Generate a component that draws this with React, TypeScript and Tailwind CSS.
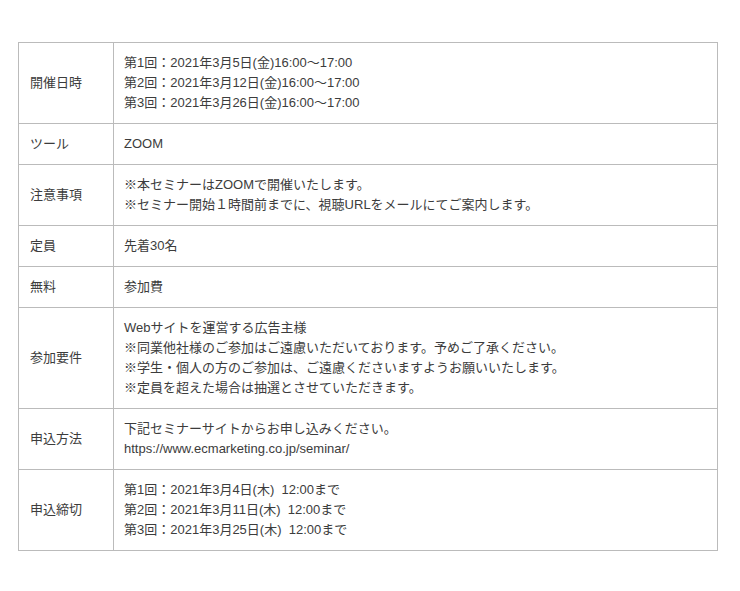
import React from "react";

const rows: { label: string; lines: string[] }[] = [
  {
    label: "開催日時",
    lines: [
      "第1回：2021年3月5日(金)16:00〜17:00",
      "第2回：2021年3月12日(金)16:00〜17:00",
      "第3回：2021年3月26日(金)16:00〜17:00",
    ],
  },
  { label: "ツール", lines: ["ZOOM"] },
  {
    label: "注意事項",
    lines: [
      "※本セミナーはZOOMで開催いたします。",
      "※セミナー開始１時間前までに、視聴URLをメールにてご案内します。",
    ],
  },
  { label: "定員", lines: ["先着30名"] },
  { label: "無料", lines: ["参加費"] },
  {
    label: "参加要件",
    lines: [
      "Webサイトを運営する広告主様",
      "※同業他社様のご参加はご遠慮いただいております。予めご了承ください。",
      "※学生・個人の方のご参加は、ご遠慮くださいますようお願いいたします。",
      "※定員を超えた場合は抽選とさせていただきます。",
    ],
  },
  {
    label: "申込方法",
    lines: [
      "下記セミナーサイトからお申し込みください。",
      "https://www.ecmarketing.co.jp/seminar/",
    ],
  },
  {
    label: "申込締切",
    lines: [
      "第1回：2021年3月4日(木)  12:00まで",
      "第2回：2021年3月11日(木)  12:00まで",
      "第3回：2021年3月25日(木)  12:00まで",
    ],
  },
];

export default function App() {
  return (
    <div
      className="bg-white w-[740px] h-[591px] pt-[42px] pl-[18px]"
      style={{ fontFamily: '"Liberation Sans", "Noto Sans CJK JP", sans-serif' }}
    >
      <table className="w-[700px] border-collapse text-[13px] leading-[20px] text-[#3c3c3c]">
        <tbody>
          {rows.map((row) => (
            <tr key={row.label}>
              <td className="w-[95px] border border-[#bbb] pl-[11px] py-[10px] align-middle">
                {row.label}
              </td>
              <td className="border border-[#bbb] pl-[10px] py-[10px] align-middle whitespace-pre">
                {row.lines.map((line) => (
                  <div key={line}>{line}</div>
                ))}
              </td>
            </tr>
          ))}
        </tbody>
      </table>
    </div>
  );
}
